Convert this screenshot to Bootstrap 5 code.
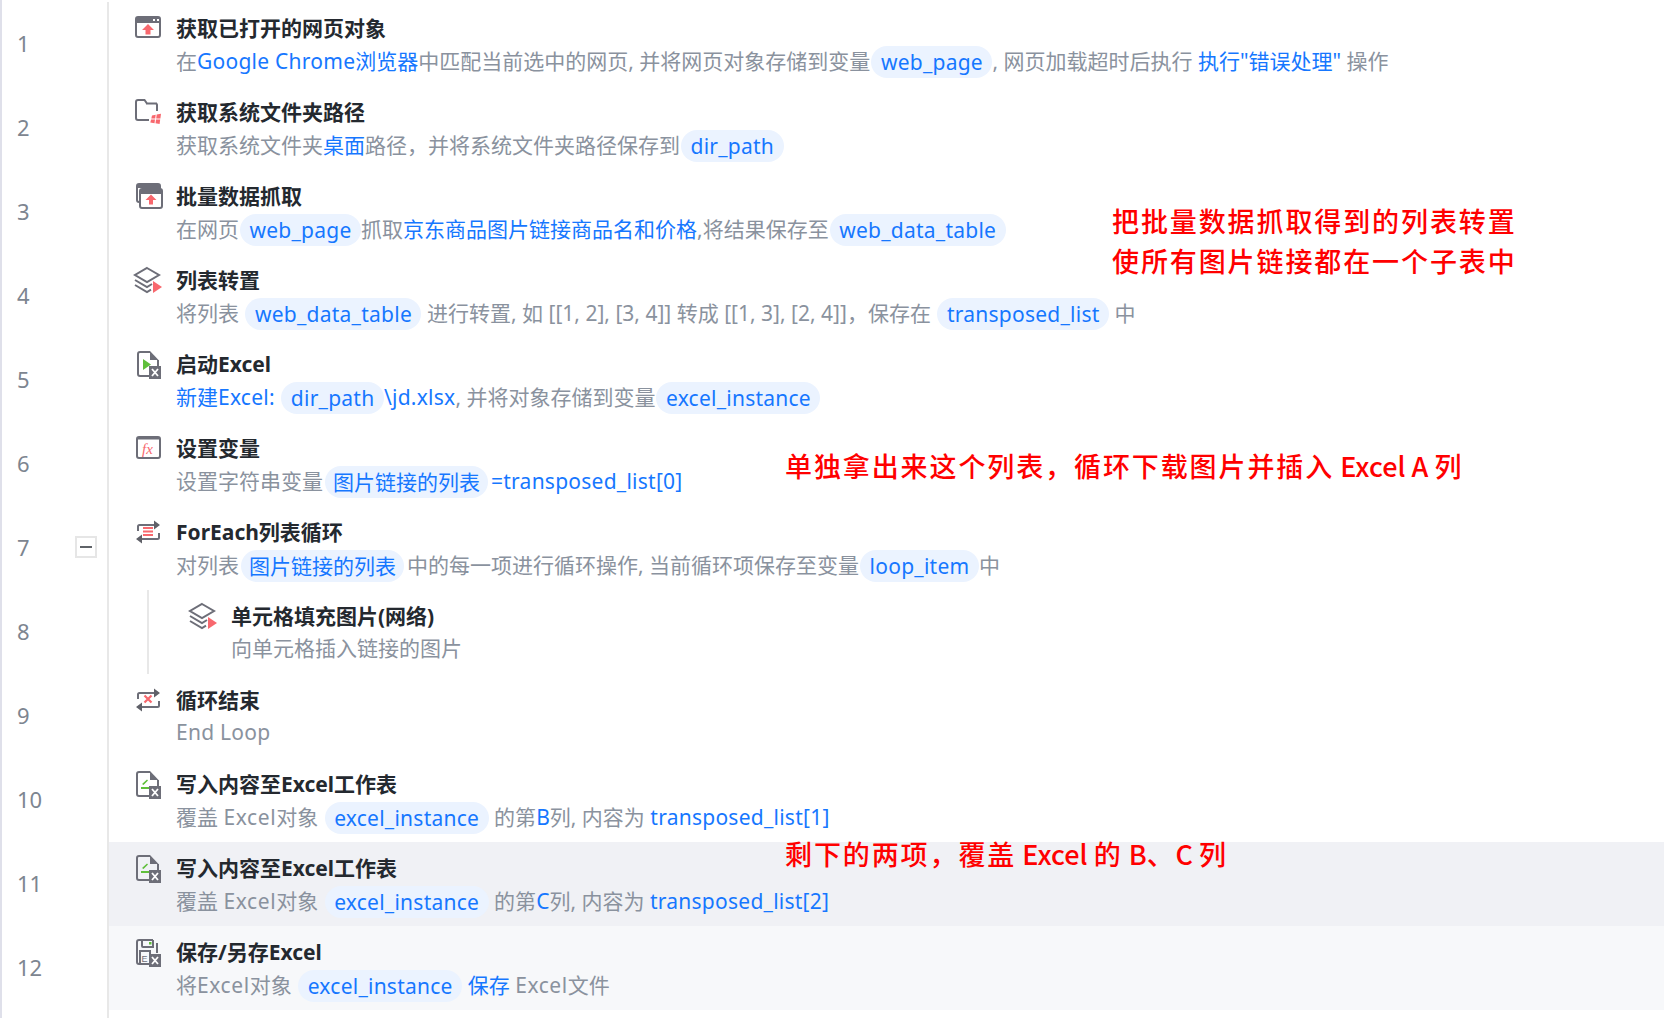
<!DOCTYPE html>
<html lang="zh-CN">
<head>
<meta charset="utf-8">
<title>流程</title>
<link rel="stylesheet" href="https://cdn.jsdelivr.net/npm/bootstrap@5.3.0/dist/css/bootstrap.min.css">
<style>
html,body{height:100%;}
body{background:#fff;font-family:"Noto Sans","Noto Sans CJK SC",sans-serif;overflow:hidden;}
.flow-wrap{position:relative;height:1018px;padding-top:2px;border-left:2px solid #dfe0ea;}
.flow-row{height:84px;}
.flow-row.is-active{background:linear-gradient(#f0f1f5,#f0f1f5) 107px 0/100% 100% no-repeat;}
.flow-row.is-hover{background:linear-gradient(#f7f8fa,#f7f8fa) 107px 0/100% 100% no-repeat;}
.gutter{width:107px;flex:none;height:100%;border-right:2px solid #e8e8e8;position:relative;}
.gutter-tail{height:8px;}
.line-no{position:absolute;left:15px;top:50%;transform:translateY(-50%);margin-top:-1px;font-size:22px;line-height:1;color:#7d8590;}
.toggle-box{position:absolute;left:73px;top:30px;width:22px;height:22px;border:2px solid #e6e6e6;background:#fff;display:flex;align-items:center;justify-content:center;}
.toggle-box::before{content:"";width:12px;height:2px;background:#5f6368;}
.step{padding-left:26px;min-width:0;flex:1;display:flex;}
.nest-rule{width:2px;flex:none;background:#e8e8e8;height:84px;margin-left:38px;margin-right:41px;}
.step-icon{width:30px;height:30px;flex:none;margin-left:-2px;margin-right:13px;margin-top:11px;}
.step-title{font-size:21px;line-height:32px;margin-top:10px;font-weight:700;color:#24292f;white-space:nowrap;}
.step-desc{font-size:21px;line-height:34px;color:#8a929e;white-space:nowrap;}
.step-desc.plain{margin-top:-1px;}
.hl{color:#1677ff;}
.lat{letter-spacing:.25px;}
.lat-wide{letter-spacing:.6px;}
.pill{display:inline-block;line-height:32px;height:32px;padding:0 9.500px;border-radius:16px;background:#ebf3ff;color:#1677ff;margin:2px 0 0 1px;vertical-align:top;}
.pill-cjk{padding:0 8px;margin-left:2px;margin-right:3px;}
.note{position:absolute;color:#ff0000;font-family:"Noto Sans CJK SC","Liberation Sans",sans-serif;font-size:27px;line-height:40px;letter-spacing:1.9px;white-space:nowrap;font-weight:500;}
.note-lat{letter-spacing:0;}
.note-a{left:1110px;top:201px;}
.note-b{left:783px;top:446px;}
.note-c{left:783px;top:834px;}
.ic-g{fill:none;stroke:#6d6e78;stroke-width:2;}
.ic-f{fill:#6d6e78;}
.ic-r{fill:#f8686e;}
.ic-gr{fill:#5fbf3a;}
</style>
</head>
<body>
<svg width="0" height="0" class="d-block" aria-hidden="true">
<defs>
<symbol id="i-web" viewBox="0 0 30 30"><rect x="3" y="4" width="24" height="20" rx="2" class="ic-g"/><rect x="3" y="4" width="24" height="6" class="ic-f"/><rect x="20" y="6" width="2" height="2" fill="#fff"/><rect x="24" y="6" width="2" height="2" fill="#fff"/><path d="M15 11l6 6h-3.500v4.500h-5v-4.500H9z" class="ic-r"/></symbol>
<symbol id="i-folder" viewBox="0 0 30 30"><path d="M24 14V8a1.500 1.500 0 0 0-1.500-1.500H14L11.500 3H5A2 2 0 0 0 3 5v16a2 2 0 0 0 2 2h11M13 6.500h11" class="ic-g"/><path d="M19 18.500l3.700-.7-.5 3.700H18.300zM23.700 17.600l4.300-.8-.6 4.700h-4.200zM18.100 22.500h3.900l-.5 3.700-4.200-.7zM23 22.500h4.200l-.6 4.500-4.100-.7z" class="ic-r"/></symbol>
<symbol id="i-webs" viewBox="0 0 30 30"><rect x="4" y="3" width="23" height="18" rx="2" class="ic-g"/><rect x="4" y="3" width="23" height="4" class="ic-f"/><rect x="7" y="8" width="22" height="19" rx="2" fill="#fff" stroke="#6d6e78" stroke-width="2"/><rect x="7" y="8" width="22" height="5" class="ic-f"/><path d="M18 13.500l5.500 5.500h-3.500v4.500h-4v-4.500h-3.500z" class="ic-r"/></symbol>
<symbol id="i-stack" viewBox="0 0 30 30"><path d="M14 3L26 10 14 17 2 10z" class="ic-g"/><path d="M2 15l12 7 5-3M2 20l12 7 4-2.300" class="ic-g"/><path d="M20 16l9 6-9 6z" class="ic-r"/></symbol>
<symbol id="i-xlrun" viewBox="0 0 30 30"><path d="M17 3H7a2 2 0 0 0-2 2v20a2 2 0 0 0 2 2h12M25 11v6" class="ic-g"/><path d="M17 2l8.500 9H17z" class="ic-f"/><path d="M10 10l8 5.500-8 5.500z" class="ic-gr"/><rect x="16" y="17" width="12" height="13" class="ic-f"/><path d="M19 20l6 7M25 20l-6 7" stroke="#fff" stroke-width="1.800" fill="none"/></symbol>
<symbol id="i-fx" viewBox="0 0 30 30"><rect x="4" y="4" width="23" height="21" rx="2" class="ic-g"/><rect x="4" y="4" width="23" height="2.500" class="ic-f"/><text x="9" y="21" font-family="Liberation Serif,serif" font-style="italic" font-size="15" fill="#f8686e">fx</text></symbol>
<symbol id="i-loop" viewBox="0 0 30 30"><path d="M5 14V9.500A1.500 1.500 0 0 1 6.500 8H24M26 16v4.500a1.500 1.500 0 0 1-1.500 1.500H7" class="ic-g"/><path d="M21 3.500l6 4.500-6 4.500zM9 17.500L3 22l6 4.500z" fill="#5f6068"/><path d="M10 10h10v2H10zM10 13.500h10v2H10zM10 17h10v2H10z" class="ic-r"/></symbol>
<symbol id="i-loopx" viewBox="0 0 30 30"><path d="M5 14V9.500A1.500 1.500 0 0 1 6.500 8H24M26 16v4.500a1.500 1.500 0 0 1-1.500 1.500H7" class="ic-g"/><path d="M21 3.500l6 4.500-6 4.500zM9 17.500L3 22l6 4.500z" fill="#5f6068"/><path d="M11.500 10.500l7 7M18.500 10.500l-7 7" stroke="#f8686e" stroke-width="2.200" fill="none"/></symbol>
<symbol id="i-xlw" viewBox="0 0 30 30"><path d="M17 3H6a2 2 0 0 0-2 2v20a2 2 0 0 0 2 2h12M25 11v6" class="ic-g"/><path d="M17 2l8.500 9H17z" class="ic-f"/><path d="M8 18h10v2H8zM9 15l5-4.500 1 1-4.500 4.500z" class="ic-gr"/><rect x="16" y="17" width="12" height="13" class="ic-f"/><path d="M19 20l6 7M25 20l-6 7" stroke="#fff" stroke-width="1.800" fill="none"/></symbol>
<symbol id="i-xls" viewBox="0 0 30 30"><path d="M20 3H6a2 2 0 0 0-2 2v20a2 2 0 0 0 2 2h9M24 6v10" class="ic-g"/><path d="M9 3v6a1 1 0 0 0 1 1h10V3" class="ic-g"/><rect x="16" y="5" width="2.500" height="2.500" class="ic-gr"/><rect x="7" y="14" width="10" height="13" class="ic-g" stroke-width="1.500"/><text x="8.500" y="25" font-family="Liberation Sans,sans-serif" font-size="9" fill="#6d6e78">E</text><rect x="16" y="17" width="12" height="13" class="ic-f"/><path d="M19 20l6 7M25 20l-6 7" stroke="#fff" stroke-width="1.800" fill="none"/></symbol>
</defs>
</svg>

<div class="flow-wrap">
  <div class="flow-row d-flex">
    <div class="gutter"><span class="line-no">1</span></div>
    <div class="step"><svg class="step-icon"><use href="#i-web"/></svg><div>
      <div class="step-title">获取已打开的网页对象</div>
      <div class="step-desc">在<span class="hl"><span class="lat">Google Chrome</span>浏览器</span>中匹配当前选中的网页, 并将网页对象存储到变量<span class="pill lat">web_page</span>, 网页加载超时后执行 <span class="hl">执行"错误处理"</span> 操作</div>
    </div></div>
  </div>
  <div class="flow-row d-flex">
    <div class="gutter"><span class="line-no">2</span></div>
    <div class="step"><svg class="step-icon"><use href="#i-folder"/></svg><div>
      <div class="step-title">获取系统文件夹路径</div>
      <div class="step-desc">获取系统文件夹<span class="hl">桌面</span>路径，并将系统文件夹路径保存到<span class="pill lat">dir_path</span></div>
    </div></div>
  </div>
  <div class="flow-row d-flex">
    <div class="gutter"><span class="line-no">3</span></div>
    <div class="step"><svg class="step-icon"><use href="#i-webs"/></svg><div>
      <div class="step-title">批量数据抓取</div>
      <div class="step-desc">在网页<span class="pill lat">web_page</span>抓取<span class="hl">京东商品图片链接商品名和价格</span>,将结果保存至<span class="pill lat">web_data_table</span></div>
    </div></div>
  </div>
  <div class="flow-row d-flex">
    <div class="gutter"><span class="line-no">4</span></div>
    <div class="step"><svg class="step-icon"><use href="#i-stack"/></svg><div>
      <div class="step-title">列表转置</div>
      <div class="step-desc">将列表 <span class="pill lat">web_data_table</span> 进行转置, 如 [[1, 2], [3, 4]] 转成 [[1, 3], [2, 4]]，保存在 <span class="pill lat">transposed_list</span> 中</div>
    </div></div>
  </div>
  <div class="flow-row d-flex">
    <div class="gutter"><span class="line-no">5</span></div>
    <div class="step"><svg class="step-icon"><use href="#i-xlrun"/></svg><div>
      <div class="step-title">启动Excel</div>
      <div class="step-desc"><span class="hl">新建<span class="lat">Excel:</span></span> <span class="pill lat">dir_path</span><span class="hl lat">\jd.xlsx</span>, 并将对象存储到变量<span class="pill lat">excel_instance</span></div>
    </div></div>
  </div>
  <div class="flow-row d-flex">
    <div class="gutter"><span class="line-no">6</span></div>
    <div class="step"><svg class="step-icon"><use href="#i-fx"/></svg><div>
      <div class="step-title">设置变量</div>
      <div class="step-desc">设置字符串变量<span class="pill pill-cjk">图片链接的列表</span><span class="hl lat">=transposed_list[0]</span></div>
    </div></div>
  </div>
  <div class="flow-row d-flex">
    <div class="gutter"><span class="line-no">7</span><span class="toggle-box"></span></div>
    <div class="step"><svg class="step-icon"><use href="#i-loop"/></svg><div>
      <div class="step-title">ForEach列表循环</div>
      <div class="step-desc">对列表<span class="pill pill-cjk">图片链接的列表</span>中的每一项进行循环操作, 当前循环项保存至变量<span class="pill lat">loop_item</span>中</div>
    </div></div>
  </div>
  <div class="flow-row d-flex">
    <div class="gutter"><span class="line-no">8</span></div>
    <div class="nest-rule"></div>
    <div class="d-flex"><svg class="step-icon"><use href="#i-stack"/></svg><div>
      <div class="step-title">单元格填充图片(网络)</div>
      <div class="step-desc plain">向单元格插入链接的图片</div>
    </div></div>
  </div>
  <div class="flow-row d-flex">
    <div class="gutter"><span class="line-no">9</span></div>
    <div class="step"><svg class="step-icon"><use href="#i-loopx"/></svg><div>
      <div class="step-title">循环结束</div>
      <div class="step-desc plain lat">End Loop</div>
    </div></div>
  </div>
  <div class="flow-row d-flex">
    <div class="gutter"><span class="line-no">10</span></div>
    <div class="step"><svg class="step-icon"><use href="#i-xlw"/></svg><div>
      <div class="step-title">写入内容至Excel工作表</div>
      <div class="step-desc">覆盖 <span class="lat-wide">Excel</span>对象 <span class="pill lat">excel_instance</span> 的第<span class="hl">B</span>列, 内容为 <span class="hl lat">transposed_list[1]</span></div>
    </div></div>
  </div>
  <div class="flow-row d-flex is-active">
    <div class="gutter"><span class="line-no">11</span></div>
    <div class="step"><svg class="step-icon"><use href="#i-xlw"/></svg><div>
      <div class="step-title">写入内容至Excel工作表</div>
      <div class="step-desc">覆盖 <span class="lat-wide">Excel</span>对象 <span class="pill lat">excel_instance</span> 的第<span class="hl">C</span>列, 内容为 <span class="hl lat">transposed_list[2]</span></div>
    </div></div>
  </div>
  <div class="flow-row d-flex is-hover">
    <div class="gutter"><span class="line-no">12</span></div>
    <div class="step"><svg class="step-icon"><use href="#i-xls"/></svg><div>
      <div class="step-title">保存/另存Excel</div>
      <div class="step-desc">将<span class="lat-wide">Excel</span>对象 <span class="pill lat">excel_instance</span> <span class="hl">保存</span> <span class="lat-wide">Excel</span>文件</div>
    </div></div>
  </div>
  <div class="gutter gutter-tail"></div>

  <div class="note note-a">把批量数据抓取得到的列表转置<br>使所有图片链接都在一个子表中</div>
  <div class="note note-b">单独拿出来这个列表，循环下载图片并插入<span class="note-lat"> Excel A </span>列</div>
  <div class="note note-c">剩下的两项，覆盖<span class="note-lat"> Excel </span>的<span class="note-lat"> B</span>、<span class="note-lat">C </span>列</div>
</div>
</body>
</html>
